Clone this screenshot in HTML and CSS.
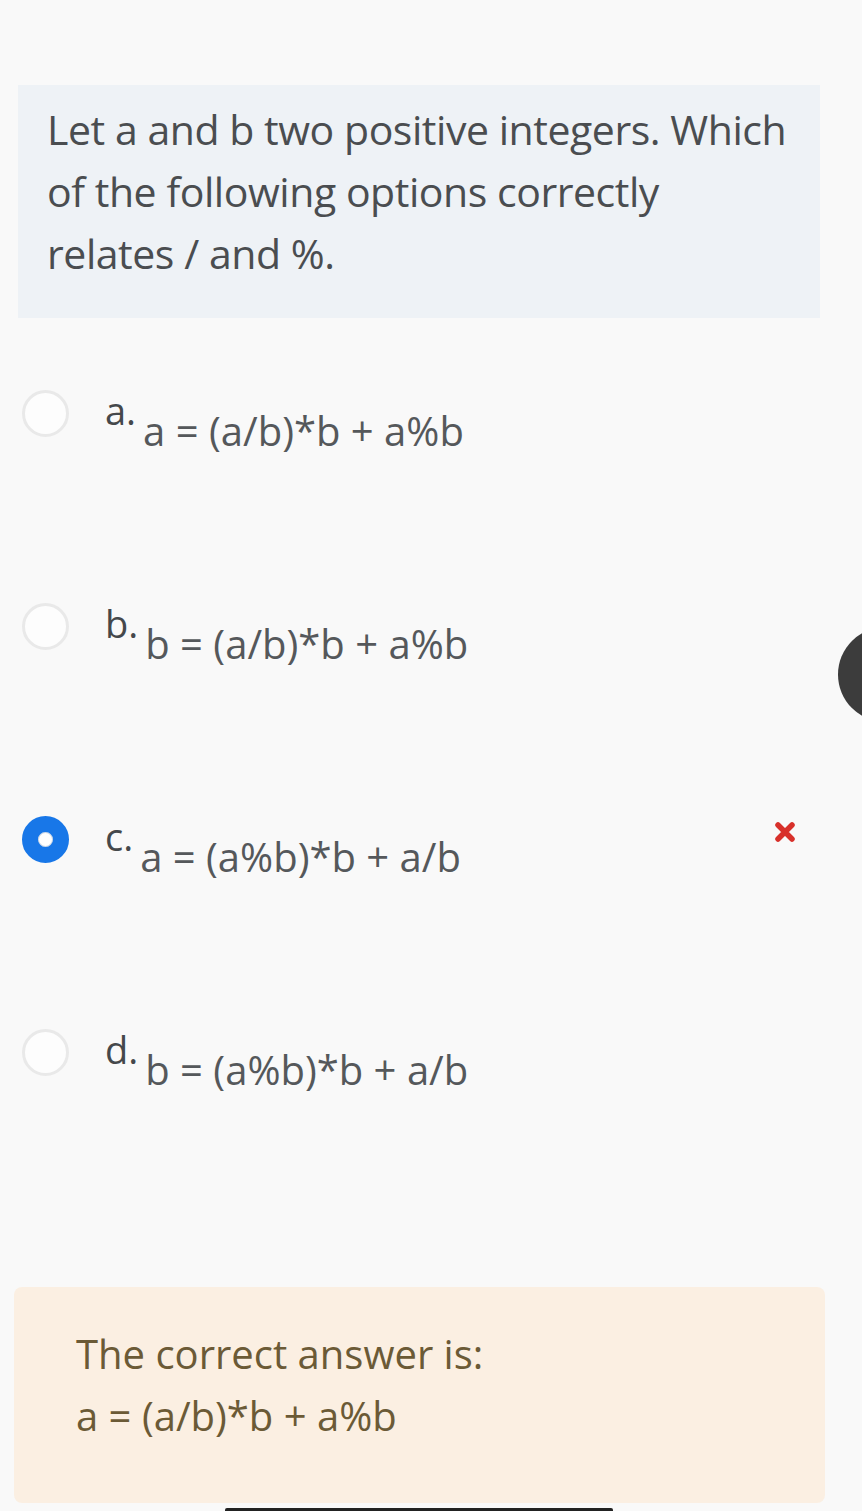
FILE: index.html
```html
<!DOCTYPE html>
<html>
<head>
<meta charset="utf-8">
<link rel="stylesheet" href="styles.css">
</head>
<body>
<div class="page">
  <div class="question">
    <p>Let a and b two positive integers. Which<br>of the following options correctly<br>relates / and %.</p>
  </div>
  <div class="answers">
    <div class="option">
      <span class="radio"></span>
      <span class="label">a.</span>
      <span class="formula">a = (a/b)*b + a%b</span>
    </div>
    <div class="option">
      <span class="radio"></span>
      <span class="label">b.</span>
      <span class="formula">b = (a/b)*b + a%b</span>
    </div>
    <div class="option">
      <span class="radio checked"></span>
      <span class="label">c.</span>
      <span class="formula">a = (a%b)*b + a/b</span>
      <svg class="wrong" viewBox="0 0 24 24" width="24" height="24"><path d="M5 5 L19 19 M19 5 L5 19" stroke="#d8312b" stroke-width="5.5" stroke-linecap="round"/></svg>
    </div>
    <div class="option">
      <span class="radio"></span>
      <span class="label">d.</span>
      <span class="formula">b = (a%b)*b + a/b</span>
    </div>
  </div>
  <div class="feedback">
    <p>The correct answer is:<br>a = (a/b)*b + a%b</p>
  </div>
</div>
<div class="fab-clip"><div class="fab"></div></div>
<div class="home-bar"></div>
</body>
</html>
```
FILE: styles.css
```css
html, body {
  margin: 0;
  padding: 0;
}
body {
  background: #f9f9f9;
  width: 862px;
  height: 1511px;
  overflow: hidden;
  position: relative;
  font-family: "Open Sans", "Liberation Sans", sans-serif;
}
.page {
  padding-top: 85px;
}
.question {
  margin: 0 42px 0 18px;
  height: 233px;
  background: #eef2f6;
  box-sizing: border-box;
  padding: 13px 20px 0 29px;
}
.question p {
  margin: 0;
  font-size: 41px;
  line-height: 62px;
  color: #4a4d50;
  letter-spacing: -0.45px;
  white-space: nowrap;
}
.answers {
  margin-top: 72px;
  display: flex;
  flex-direction: column;
}
.option {
  height: 213px;
  display: flex;
  align-items: flex-start;
  position: relative;
}
.radio {
  flex: none;
  width: 47px;
  height: 47px;
  box-sizing: border-box;
  border: 3px solid #e9e9e9;
  border-radius: 50%;
  background: #fdfdfd;
  margin-left: 22px;
}
.radio.checked {
  border: 16px solid #1877e8;
  background: #fff;
  box-shadow: inset 0 0 0 1px #cfd8e3;
}
.label {
  margin-left: 36px;
  font-size: 38px;
  line-height: 38px;
  margin-top: 1px;
  color: #45484b;
}
.formula {
  margin-left: 7px;
  margin-top: 21px;
  font-size: 40px;
  line-height: 40px;
  color: #55585b;
}
.wrong {
  position: absolute;
  left: 773px;
  top: 4px;
}
.feedback {
  margin: 45px 37px 0 14px;
  height: 216px;
  background: #fbefe2;
  border-radius: 8px;
  box-sizing: border-box;
  padding: 36px 0 0 62px;
}
.feedback p {
  margin: 0;
  font-size: 40px;
  line-height: 62px;
  color: #6b5a36;
}
.fab-clip {
  position: absolute;
  left: 838px;
  top: 627px;
  width: 24px;
  height: 95px;
  overflow: hidden;
}
.fab {
  width: 95px;
  height: 95px;
  border-radius: 50%;
  background: #3c3c3c;
}
.home-bar {
  position: absolute;
  left: 225px;
  top: 1508px;
  width: 388px;
  height: 3px;
  border-radius: 2px 2px 0 0;
  background: #222;
}
```
